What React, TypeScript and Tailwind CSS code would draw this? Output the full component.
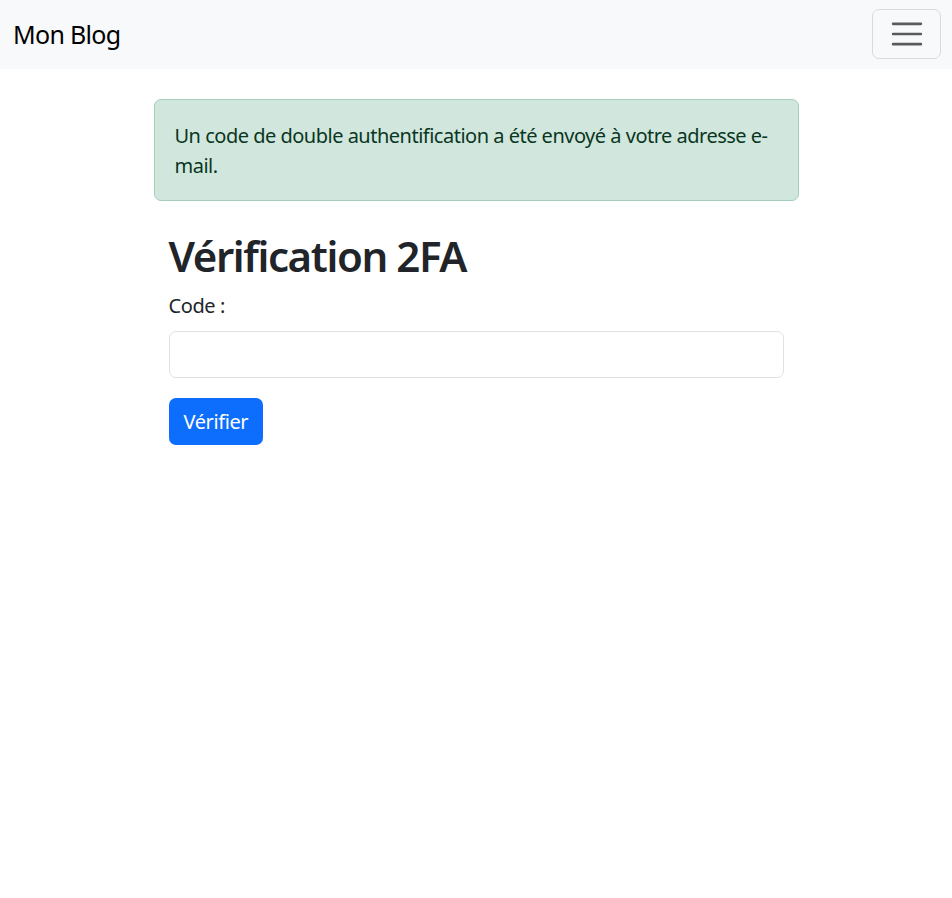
import { useState } from "react";

const font = { fontFamily: '"Noto Sans", "Open Sans", sans-serif' };

const Navbar = () => (
  <nav className="bg-[#f8f9fa] h-[69px] flex items-center justify-between pl-[12px] pr-[11px]">
    <a href="#" className="text-[25px] text-black leading-none pl-[1px] tracking-[-0.7px]">
      Mon Blog
    </a>
    <button
      type="button"
      aria-label="Menu"
      className="w-[69px] h-[50px] -mt-[1px] flex items-center justify-center border border-[#d9dadb] rounded-[7px]"
    >
      <svg width="38" height="38" viewBox="0 0 30 30" aria-hidden="true">
        <path
          d="M4 7h22M4 15h22M4 23h22"
          stroke="rgba(33,37,41,0.75)"
          strokeWidth="2"
          strokeLinecap="round"
          strokeMiterlimit="10"
        />
      </svg>
    </button>
  </nav>
);

export default function App() {
  const [code, setCode] = useState("");

  return (
    <div className="min-h-screen bg-white text-[#212529]" style={font}>
      <Navbar />

      <main className="w-[675px] mx-auto px-[15px] pt-[30px]">
        {/* message flash */}
        <div className="bg-[#d1e7dd] border border-[#a3cfbb] text-[#0a3622] rounded-[7px] px-[20px] pt-[21px] pb-[19px] text-[20px] leading-[30px] tracking-[-0.5px] mb-[30px]">
          Un code de double authentification a été envoyé à votre adresse e-mail.
        </div>

        <div className="px-[15px]">
          <h1 className="text-[42px] font-semibold leading-[50px] tracking-[-1.4px] mb-[10px]">Vérification 2FA</h1>
          <form onSubmit={(e) => e.preventDefault()}>
            <label htmlFor="code" className="block text-[20px] leading-[30px] tracking-[-0.4px] mb-[10px]">
              Code :
            </label>
            <input
              id="code"
              type="text"
              value={code}
              onChange={(e) => setCode(e.target.value)}
              className="block w-full h-[47px] border border-[#dee2e6] rounded-[7px] px-[15px] text-[20px] mb-[20px] outline-none"
            />
            <button
              type="submit"
              className="bg-[#0d6efd] text-white text-[20px] leading-[30px] tracking-[-0.4px] h-[47px] px-[15px] rounded-[7px]"
            >
              Vérifier
            </button>
          </form>
        </div>
      </main>
    </div>
  );
}
